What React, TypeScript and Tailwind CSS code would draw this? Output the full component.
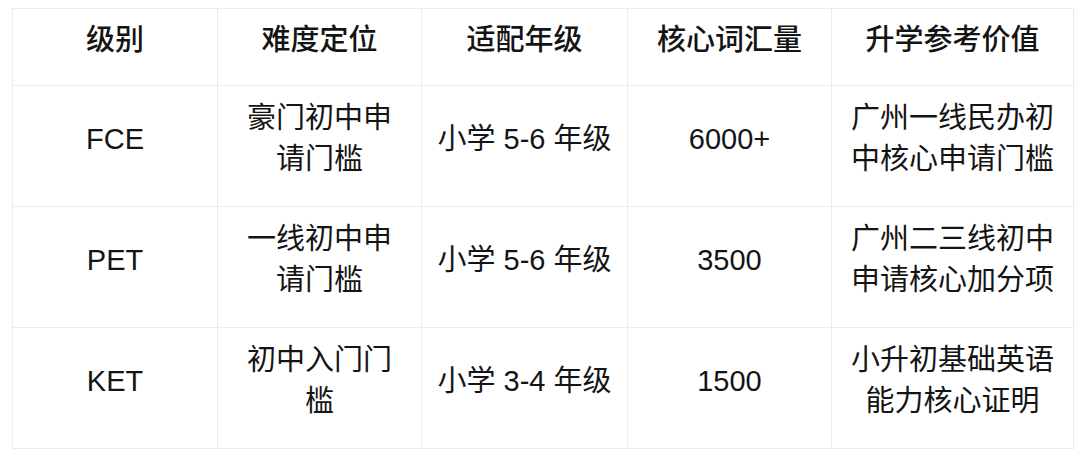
const rows = [
  {
    level: "FCE",
    difficulty: "豪门初中申请门槛",
    grade: "小学 5-6 年级",
    words: "6000+",
    value: "广州一线民办初中核心申请门槛",
  },
  {
    level: "PET",
    difficulty: "一线初中申请门槛",
    grade: "小学 5-6 年级",
    words: "3500",
    value: "广州二三线初中申请核心加分项",
  },
  {
    level: "KET",
    difficulty: "初中入门门槛",
    grade: "小学 3-4 年级",
    words: "1500",
    value: "小升初基础英语能力核心证明",
  },
];

const headers = ["级别", "难度定位", "适配年级", "核心词汇量", "升学参考价值"];

export default function App() {
  return (
    <div
      className="w-[1080px] h-[457px] bg-white pt-[8px] pl-[12px] text-[#141414]"
      style={{ fontFamily: '"Liberation Sans", "Noto Sans CJK SC", sans-serif' }}
    >
      <table className="table-fixed border-collapse w-[1061px]">
        <colgroup>
          <col className="w-[205px]" />
          <col className="w-[204px]" />
          <col className="w-[206px]" />
          <col className="w-[204px]" />
          <col className="w-[242px]" />
        </colgroup>
        <thead>
          <tr className="h-[77px]">
            {headers.map((h) => (
              <th
                key={h}
                className="border border-[#ececec] px-[18px] pb-[14px] text-center align-middle text-[29px] leading-[40px] font-medium"
              >
                {h}
              </th>
            ))}
          </tr>
        </thead>
        <tbody>
          {rows.map((r) => (
            <tr key={r.level} className="h-[121px]">
              {[r.level, r.difficulty, r.grade, r.words, r.value].map((c, i) => (
                <td
                  key={i}
                  className={
                    i === 2
                      ? "border border-[#ececec] px-[8px] pb-[14px] text-center align-middle text-[29px] leading-[41px] whitespace-nowrap"
                      : "border border-[#ececec] px-[18px] pb-[14px] text-center align-middle text-[29px] leading-[41px]"
                  }
                >
                  {c}
                </td>
              ))}
            </tr>
          ))}
        </tbody>
      </table>
    </div>
  );
}
